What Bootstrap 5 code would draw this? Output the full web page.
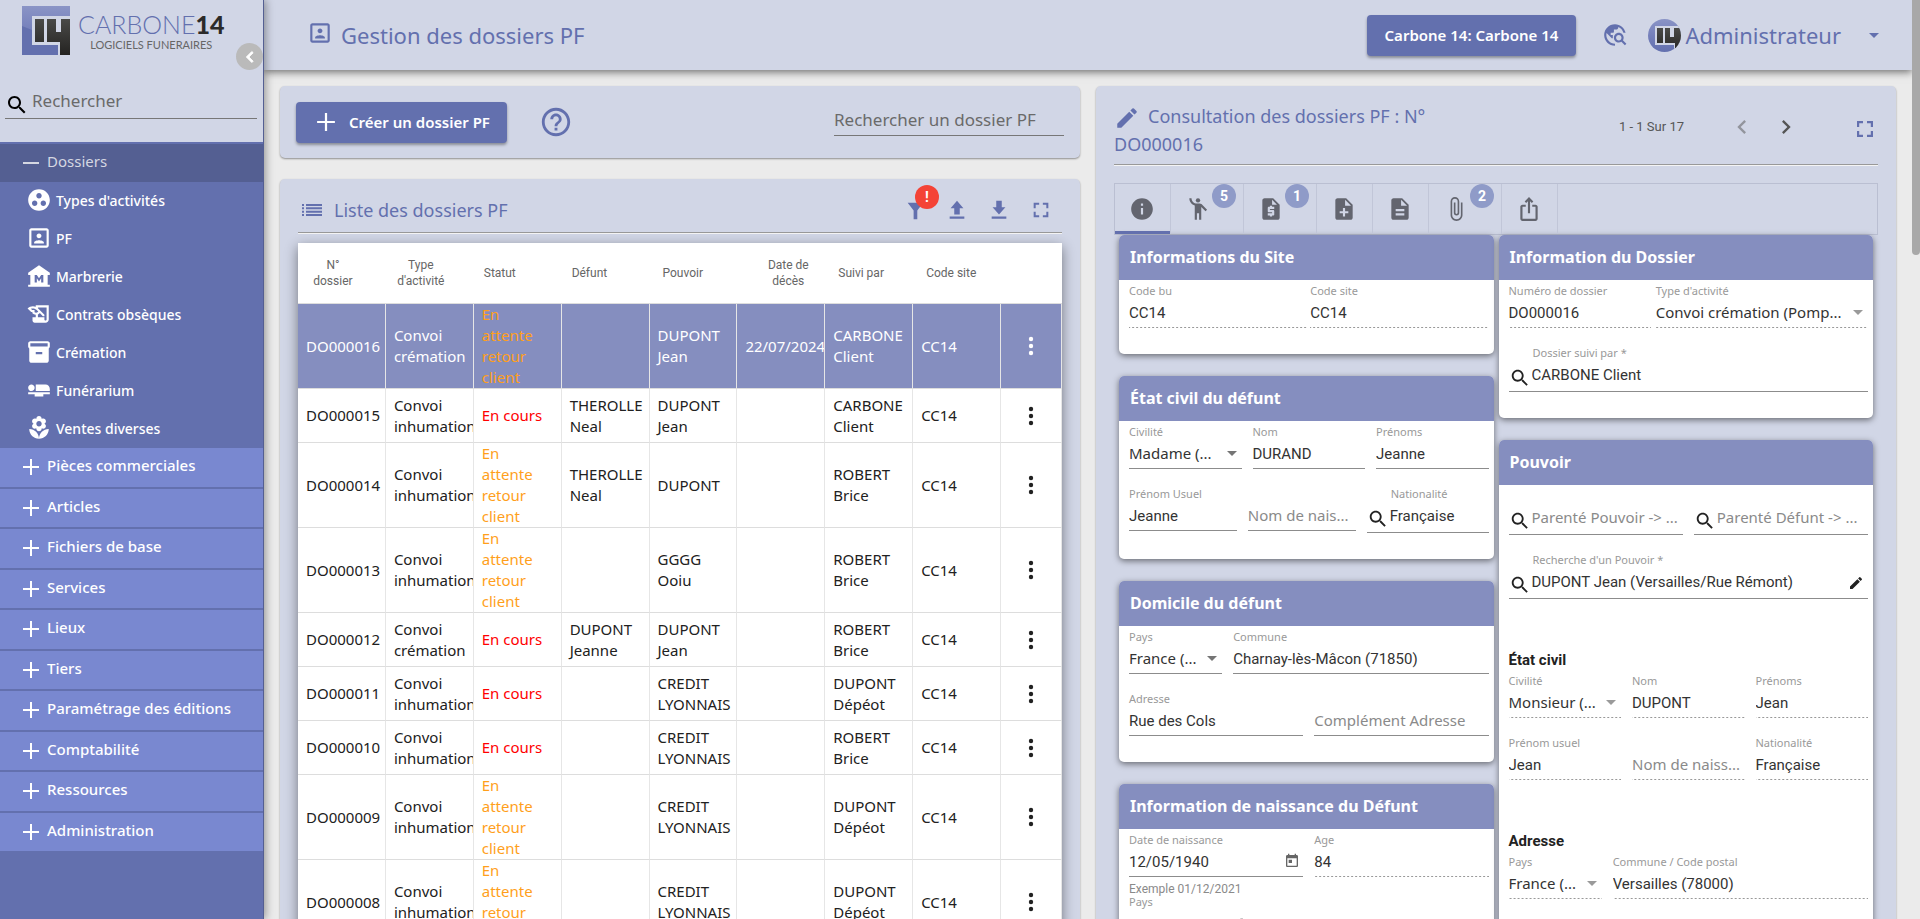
<!DOCTYPE html>
<html lang="fr">
<head>
<meta charset="utf-8">
<meta name="viewport" content="width=device-width, initial-scale=1">
<title>Gestion des dossiers PF</title>
<link href="https://cdn.jsdelivr.net/npm/bootstrap@5.3.0/dist/css/bootstrap.min.css" rel="stylesheet">
<style>
:root{--brand:#6370ae;--brand-soft:#858ebf;--panel:#d1d6e6;--ui:"Noto Sans",sans-serif;--num:Roboto,sans-serif}
body{font-family:var(--ui);font-size:15px;background:#ebebeb;color:#212121}
svg{fill:currentColor;flex:none;display:block}
button{border:0;background:none;padding:0;color:inherit}
a{text-decoration:none}
.i16{width:16px;height:16px}.i20{width:20px;height:20px}.i22{width:22px;height:22px}.i24{width:24px;height:24px}.i26{width:26px;height:26px}.i34{width:34px;height:34px}

/* sidebar */
.side{width:264px;background:var(--brand);border-right:1px solid #545f92;box-shadow:2px 0 8px rgba(0,0,0,.35);z-index:3}
.side-top{background:var(--panel);height:142px;position:relative}
.logo-row{padding:6px 0 0 22px}
.brand-name{font:300 25px/28px Lato,sans-serif;color:var(--brand)}
.brand-name b{font-weight:900;color:#2b2a29}
.brand-sub{font:400 11px/14px Lato,sans-serif;color:#666}
.fold{position:absolute;right:0;top:43px;width:27px;height:27px;border-radius:50%;background:#bababa;color:#fff}
.side-search{border-bottom:1px solid #777;margin:28px 6px 0 5px;height:36px;gap:3px}
.bare{border:0;outline:0;background:transparent;padding:0;min-width:0;width:100%;height:30px;font-size:17px;color:inherit}
.bare::placeholder{color:#6a6a6a;opacity:1}
.nav-top{display:flex;align-items:center;gap:7px;padding:6px 0 10px 22px;color:#fff;background:#7988d0;border-bottom:2px solid var(--brand);font-weight:500;line-height:1.5;width:100%;text-align:left}
.nav-top svg{margin-top:4px;width:18px;height:18px}
.nav-top.open{background:#545f92;color:#d5d7e2;height:38px;border:0;font-weight:400}
.nav-sub{display:flex;align-items:center;gap:4px;padding:0 0 2px 26px;color:#fff;height:38px;font-size:14px;font-weight:500}

/* header bar */
.bar{height:70px;background:var(--panel);color:var(--brand);box-shadow:0 2px 8px rgba(0,0,0,.55);z-index:2;padding:0 33px 0 43px}
.t22{font-size:22px;line-height:28px}
.solid{background:var(--brand);color:#fff;border-radius:4px;height:41px;font-size:15px;font-weight:600;box-shadow:0 2px 3px rgba(0,0,0,.35)}
.thumb{width:8px;background:#ebebeb}
.thumb i{display:block;height:255px;background:#a8a8a8;border-radius:0 0 4px 4px}

/* panels */
.halves{display:grid;grid-template-columns:repeat(2,minmax(0,1fr));min-height:0}
.pane{background:var(--panel);border-radius:5px;box-shadow:0 1px 2px rgba(0,0,0,.4);color:var(--brand)}
.pane h2{font-size:18px;line-height:27px;margin:0;font-weight:400}
.rule{height:2px;background:linear-gradient(#999 50%,#f4f4f4 50%)}
.finder{width:230px;border-bottom:1px solid #777;color:#333;height:32px}
.dot{position:absolute;width:24px;height:24px;border-radius:50%;color:#fff;font:700 14px/24px var(--num);text-align:center}
.dot.alert-dot{background:#f44336;right:-13px;top:-14px}

/* list */
.grid-list{width:100%;table-layout:fixed;background:#fff;color:#212121;box-shadow:0 4px 12px rgba(0,0,0,.45);line-height:21px;border-collapse:separate;border-spacing:0}
.grid-list th{height:61px;font:400 12px/16px var(--num);color:#666;padding:0 2px 0 10px;border-bottom:1px solid #ddd}
.grid-list th.mid{text-align:center;padding:0 18px 0 0}
.grid-list th.mid-r{padding:0 0 0 14px}
.grid-list th.in1{padding-left:13px}
.grid-list td{height:54px;padding:0 0 0 8px;border-bottom:1px solid #ddd;border-right:1px solid #e6e6e6;overflow:hidden;font-size:15px}
.grid-list td.tall{height:85px}
.grid-list td:last-child{padding:0}
.grid-list td button{display:block;margin:auto}
.grid-list .wait{color:#ff9f1c}.grid-list .run{color:#f00}
.grid-list .sel td{background:var(--brand-soft);color:#fff}
.grid-list .sel td.wait{color:#ff9f1c}

/* tabs */
.tabs{border:1px solid #babfd2;height:52px;color:#63656f}
.tabs button{position:relative;width:56px;border-right:1px solid #c1c6d8;padding-left:14px}
.tabs button.wide{width:73px}
.tabs button.on{box-shadow:inset 0 -3px var(--brand)}
.tabs .dot{background:#8f9bc8;right:7px;top:0}

/* record sheets */
.sheets{padding:0 5px;gap:5px}
.sheet{background:#fff;border-radius:5px;box-shadow:0 2px 6px rgba(0,0,0,.5);margin-bottom:22px;overflow:hidden;color:#333}
.sheet h3{background:var(--brand-soft);color:#fff;font-size:16px;font-weight:700;line-height:45px;margin:0;padding-left:11px}
.sheet-in{padding:0 5px 12px 10px}
.fr{display:grid;gap:11px}
.c2{grid-template-columns:1fr 1fr}.c3{grid-template-columns:repeat(3,1fr)}
.c3s{grid-template-columns:108fr 108fr 122fr}.c-pays{grid-template-columns:93fr 255fr}.c-num{grid-template-columns:142fr 212fr;gap:5px}
.fld{min-width:0;margin-bottom:14px;position:relative}
.fld label{display:block;font-size:11px;line-height:14px;padding-top:4px;color:#999;white-space:nowrap}
.fld.nolab{padding-top:18px}
.fld input,.fld select{display:block;width:100%;height:30px;border:0;border-bottom:1px solid #8c8c8c;border-radius:0;background:transparent;padding:0;outline:0;color:#333;font-family:var(--num);font-size:15px;appearance:none;min-width:0;text-overflow:ellipsis}
.fld select{font-family:var(--ui);padding-right:24px;font-size:15px}
.fld input::placeholder{font-family:var(--ui);font-size:15px;color:#8a8a8a;opacity:1}
.fld.ro input,.fld.ro select{border-bottom-color:transparent;background:linear-gradient(to right,#999 0 50%,transparent 0) bottom/4px 1px repeat-x border-box}
.fld.dd::after{content:"";position:absolute;right:5px;top:30px;border:5px solid transparent;border-top-color:#757575;border-bottom:0}
.fld.ro.dd::after{border-top-color:#9a9a9a}
.fld.find label{padding-left:24px}
.fld.find .line{display:flex;gap:1px;height:32px;border-bottom:1px solid #8c8c8c;color:#222}
.fld.find .line>svg{margin-top:7px}
.fld.find input{border:0}
.hint{display:block;height:14px;margin-bottom:-14px;font:400 12px/24px var(--num);color:#8a8a8a}
.cal{position:absolute;right:3px;top:24px;color:#666}
.part{font:700 15px/20px var(--num);margin:37px 0 0;color:#222}
</style>
<script src="https://cdn.jsdelivr.net/npm/bootstrap@5.3.0/dist/js/bootstrap.bundle.min.js"></script>
</head>
<body class="vh-100 overflow-hidden">
<svg width="0" height="0" class="position-absolute" aria-hidden="true"><defs>
<linearGradient id="gb" x1="0" y1="0" x2="0" y2="1"><stop offset="0" stop-color="#8a94c6"/><stop offset=".5" stop-color="#7580bb"/><stop offset="1" stop-color="#6370ae"/></linearGradient>
<linearGradient id="gk" x1="0" y1="0" x2="0" y2="1"><stop offset="0" stop-color="#4a4a48"/><stop offset="1" stop-color="#242321"/></linearGradient>
<symbol id="logo" viewBox="0 0 48 49"><path fill="url(#gb)" d="M0 0h48v10H10v29h26v10H0z"/><path fill="#6370ae" d="M0 20l10 4v15h26v10H0z"/><path fill="url(#gk)" d="M13 13h9v23h-9zM25 13h9v13h5V13h9v36H38V36H25z"/></symbol>
<symbol id="search" viewBox="0 0 24 24"><path d="M15.500 14h-.79l-.28-.27C15.410 12.590 16 11.110 16 9.500 16 5.910 13.090 3 9.500 3S3 5.910 3 9.500 5.910 16 9.500 16c1.610 0 3.090-.59 4.230-1.570l.27.28v.79l5 4.990L20.490 19l-4.990-5zm-6 0C7.010 14 5 11.990 5 9.500S7.010 5 9.500 5 14 7.010 14 9.500 11.990 14 9.500 14z"/></symbol>
<symbol id="plus" viewBox="0 0 18 18"><path d="M8 1h2v7h7v2h-7v7H8v-7H1V8h7z"/></symbol>
<symbol id="minus" viewBox="0 0 18 18"><path d="M1 8h16v2H1z"/></symbol>
<symbol id="left" viewBox="0 0 24 24"><path d="M15.410 7.410L14 6l-6 6 6 6 1.410-1.410L10.830 12z"/></symbol>
<symbol id="right" viewBox="0 0 24 24"><path d="M10 6L8.590 7.410 13.170 12l-4.580 4.590L10 18l6-6z"/></symbol>
<symbol id="work" viewBox="0 0 24 24"><path d="M12 2C6.480 2 2 6.480 2 12s4.480 10 10 10 10-4.480 10-10S17.520 2 12 2zM8 17.500c-1.380 0-2.500-1.120-2.500-2.500s1.120-2.500 2.500-2.500 2.500 1.120 2.500 2.500-1.120 2.500-2.500 2.500zM9.500 8c0-1.380 1.120-2.500 2.500-2.500s2.500 1.120 2.500 2.500-1.120 2.500-2.500 2.500S9.500 9.380 9.500 8zm6.500 9.500c-1.380 0-2.500-1.120-2.500-2.500s1.120-2.500 2.500-2.500 2.500 1.120 2.500 2.500-1.120 2.500-2.500 2.500z"/></symbol>
<symbol id="portrait" viewBox="0 0 24 24"><path d="M12 12.250c1.240 0 2.250-1.010 2.250-2.250S13.240 7.750 12 7.750 9.750 8.760 9.750 10s1.010 2.250 2.250 2.250zm4.500 4c0-1.500-3-2.250-4.500-2.250s-4.500.75-4.500 2.250V17h9v-.75zM19 3H5c-1.100 0-2 .9-2 2v14c0 1.100.9 2 2 2h14c1.100 0 2-.9 2-2V5c0-1.100-.9-2-2-2zm0 16H5V5h14v14z"/></symbol>
<symbol id="museum" viewBox="0 0 24 24"><path d="M22 11V9L12 2 2 9v2h2v9H2v2h20v-2h-2v-9h2zm-6 7h-2v-4l-2 3-2-3v4H8v-7h2l2 3 2-3h2v7z"/></symbol>
<symbol id="edu" viewBox="0 0 24 24"><path d="M9 4v1.380c-.83-.33-1.720-.5-2.610-.5-1.790 0-3.580.68-4.950 2.050l3.330 3.330h1.110v1.110c.86.86 1.980 1.310 3.110 1.360V15H6v3c0 1.100.9 2 2 2h10c1.660 0 3-1.340 3-3V4H9zM7.890 10.410V8.260H5.610L4.570 7.220C5.140 7 5.760 6.880 6.390 6.880c1.340 0 2.590.52 3.540 1.460l1.410 1.410-.2.2c-.51.51-1.190.8-1.920.8-.47 0-.93-.12-1.330-.34zM19 17c0 .55-.45 1-1 1s-1-.45-1-1v-2h-6v-2.590c.57-.23 1.100-.57 1.560-1.030l.2-.2L15.590 14H17v-1.410l-6-5.970V6h8v11z"/></symbol>
<symbol id="box" viewBox="0 0 24 24"><path d="M20 2H4c-1 0-2 .9-2 2v3.010c0 .72.43 1.340 1 1.690V20c0 1.100 1.100 2 2 2h14c.9 0 2-.9 2-2V8.700c.57-.35 1-.97 1-1.690V4c0-1.100-1-2-2-2zm-5 12H9v-2h6v2zm5-7H4V4h16v3z"/></symbol>
<symbol id="bed" viewBox="0 0 24 24"><path d="M22 11v2H9V7h9c2.210 0 4 1.790 4 4zM2 14v2h6v2h8v-2h6v-2H2zm5.140-1.900c1.160-1.190 1.140-3.080-.04-4.240-1.190-1.160-3.080-1.140-4.240.04-1.160 1.190-1.140 3.080.04 4.240 1.190 1.160 3.080 1.140 4.240-.04z"/></symbol>
<symbol id="flower" viewBox="0 0 24 24"><path d="M12 22c4.970 0 9-4.030 9-9-4.970 0-9 4.030-9 9zM5.600 10.250c0 1.380 1.120 2.500 2.500 2.500.53 0 1.010-.16 1.420-.44l-.02.19c0 1.380 1.120 2.500 2.500 2.500s2.500-1.120 2.500-2.500l-.02-.19c.4.28.89.44 1.420.44 1.380 0 2.500-1.120 2.500-2.500 0-1-.59-1.850-1.430-2.250.84-.4 1.430-1.250 1.430-2.250 0-1.380-1.120-2.500-2.500-2.500-.53 0-1.010.16-1.420.44l.02-.19C14.500 2.120 13.380 1 12 1S9.500 2.120 9.500 3.500l.02.19c-.4-.28-.89-.44-1.420-.44-1.380 0-2.500 1.120-2.500 2.500 0 1 .59 1.850 1.430 2.250-.84.4-1.430 1.250-1.430 2.250zM12 5.500c1.380 0 2.500 1.120 2.500 2.500s-1.120 2.500-2.500 2.500S9.500 9.380 9.500 8s1.120-2.500 2.500-2.500zM3 13c0 4.970 4.030 9 9 9 0-4.970-4.030-9-9-9z"/></symbol>
<symbol id="explore" viewBox="0 0 24 24"><path d="M19.300 16.900c.4-.7.7-1.500.7-2.400 0-2.500-2-4.500-4.500-4.500S11 12 11 14.500s2 4.500 4.500 4.500c.9 0 1.700-.3 2.400-.7l3.200 3.200 1.400-1.400-3.200-3.200zm-3.800.1c-1.400 0-2.500-1.100-2.500-2.500s1.100-2.500 2.500-2.500 2.500 1.100 2.500 2.500-1.100 2.500-2.500 2.500zM12 20v2C6.480 22 2 17.520 2 12S6.480 2 12 2c4.840 0 8.870 3.440 9.800 8h-2.070A8 8 0 0 0 15 4.590V5c0 1.100-.9 2-2 2h-2v2c0 .55-.45 1-1 1H8v2h2v3H9l-4.790-4.790C4.080 10.790 4 11.380 4 12c0 4.410 3.590 8 8 8z"/></symbol>
<symbol id="help" viewBox="0 0 24 24"><path d="M11 18h2v-2h-2v2zm1-16C6.480 2 2 6.480 2 12s4.480 10 10 10 10-4.480 10-10S17.520 2 12 2zm0 18c-4.410 0-8-3.590-8-8s3.590-8 8-8 8 3.590 8 8-3.590 8-8 8zm0-14c-2.210 0-4 1.790-4 4h2c0-1.100.9-2 2-2s2 .9 2 2c0 2-3 1.750-3 5h2c0-2.250 3-2.500 3-5 0-2.210-1.790-4-4-4z"/></symbol>
<symbol id="list" viewBox="0 0 20 12"><path d="M0 0h2v2H0zM4 0h16v2H4zM0 3.300h2v2H0zM4 3.300h16v2H4zM0 6.700h2v2H0zM4 6.700h16v2H4zM0 10h2v2H0zM4 10h16v2H4z"/></symbol>
<symbol id="filter" viewBox="0 0 24 24"><path d="M4 4h17l-6.500 8.500V22h-4v-9.500z"/></symbol>
<symbol id="up" viewBox="0 0 24 24"><path d="M12 2l7 8h-4v7H9v-7H5zM4 19h16v2.500H4z"/></symbol>
<symbol id="down" viewBox="0 0 24 24"><path d="M12 17l7-8h-4V2H9v7H5zM4 19h16v2.500H4z"/></symbol>
<symbol id="full" viewBox="0 0 24 24"><path d="M4 4h6v2.200H6.200V10H4zM14 4h6v6h-2.200V6.200H14zM4 14h2.200v3.800H10V20H4zM17.800 14H20v6h-6v-2.200h3.800z"/></symbol>
<symbol id="dots" viewBox="0 0 24 24"><circle cx="12" cy="5" r="2.200"/><circle cx="12" cy="12" r="2.200"/><circle cx="12" cy="19" r="2.200"/></symbol>
<symbol id="pen" viewBox="0 0 24 24"><path d="M3 17.250V21h3.750L17.810 9.940l-3.750-3.750L3 17.250zM20.710 7.040a1 1 0 0 0 0-1.410l-2.340-2.340a1 1 0 0 0-1.410 0l-1.830 1.830 3.750 3.750 1.830-1.830z"/></symbol>
<symbol id="info" viewBox="0 0 24 24"><path d="M12 2C6.480 2 2 6.480 2 12s4.480 10 10 10 10-4.480 10-10S17.520 2 12 2zm1 15h-2v-6h2v6zm0-8h-2V7h2v2z"/></symbol>
<symbol id="man" viewBox="0 0 24 24"><circle cx="12" cy="4" r="2"/><path d="M15.890 8.110C15.500 7.720 14.830 7 13.530 7h-2.540C8.240 6.990 6 4.750 6 2H4c0 3.160 2.110 5.840 5 6.710V22h2v-6h2v6h2V10.050L18.950 14l1.410-1.410-4.470-4.480z"/></symbol>
<symbol id="docm" viewBox="0 0 24 24"><path d="M14 2H6c-1.100 0-2 .9-2 2v16c0 1.100.89 2 1.990 2H18c1.100 0 2-.9 2-2V8l-6-6zm1 10h-4v1h3c.55 0 1 .45 1 1v3c0 .55-.45 1-1 1h-1v1h-2v-1H9v-2h4v-1h-3c-.55 0-1-.45-1-1v-3c0-.55.45-1 1-1h1V9h2v1h2v2zm-2-4V3.500L17.500 8H13z"/></symbol>
<symbol id="docp" viewBox="0 0 24 24"><path d="M14 2H6c-1.100 0-2 .9-2 2v16c0 1.100.89 2 1.990 2H18c1.100 0 2-.9 2-2V8l-6-6zm2 14h-3v3h-2v-3H8v-2h3v-3h2v3h3v2zm-3-7V3.500L18.500 9H13z"/></symbol>
<symbol id="doct" viewBox="0 0 24 24"><path d="M14 2H6c-1.100 0-2 .9-2 2v16c0 1.100.89 2 1.990 2H18c1.100 0 2-.9 2-2V8l-6-6zm2 16H8v-2h8v2zm0-4H8v-2h8v2zm-3-5V3.500L18.500 9H13z"/></symbol>
<symbol id="clip" viewBox="0 0 24 24"><path d="M16.500 6v11.500c0 2.210-1.790 4-4 4s-4-1.790-4-4V5a2.500 2.500 0 0 1 5 0v10.500c0 .55-.45 1-1 1s-1-.45-1-1V6H10v9.500a2.500 2.500 0 0 0 5 0V5c0-2.210-1.790-4-4-4S7 2.790 7 5v12.500c0 3.040 2.460 5.500 5.500 5.500s5.500-2.460 5.500-5.500V6h-1.500z"/></symbol>
<symbol id="share" viewBox="0 0 24 24"><path d="M16 5l-1.420 1.420-1.590-1.590V16h-1.980V4.830L9.420 6.420 8 5l4-4 4 4zm4 5v11c0 1.100-.9 2-2 2H6c-1.110 0-2-.9-2-2V10c0-1.110.89-2 2-2h3v2H6v11h12V10h-3V8h3c1.100 0 2 .89 2 2z"/></symbol>
<symbol id="today" viewBox="0 0 24 24"><path d="M19 3h-1V1h-2v2H8V1H6v2H5c-1.110 0-1.990.9-1.990 2L3 19c0 1.100.89 2 2 2h14c1.100 0 2-.9 2-2V5c0-1.100-.9-2-2-2zm0 16H5V8h14v11zM7 10h5v5H7z"/></symbol>
</defs></svg>

<div class="d-flex h-100">
<aside class="side d-flex flex-column flex-shrink-0">
  <div class="side-top">
    <div class="logo-row d-flex gap-2">
      <svg width="48" height="49"><use href="#logo"/></svg>
      <div class="pt-1"><div class="brand-name">CARBONE<b>14</b></div><div class="brand-sub text-center">LOGICIELS FUNERAIRES</div></div>
    </div>
    <button class="fold d-flex align-items-center justify-content-center" aria-label="Réduire le menu"><svg class="i22" stroke="currentColor"><use href="#left"/></svg></button>
    <div class="side-search d-flex align-items-center">
      <svg class="i24 mt-2 text-black"><use href="#search"/></svg>
      <label class="visually-hidden" for="menuq">Rechercher</label><input id="menuq" class="bare" placeholder="Rechercher">
    </div>
  </div>
  <nav class="d-block" style="padding-top:2px" aria-label="Menu">
    <button class="nav-top open"><svg><use href="#minus"/></svg>Dossiers</button>
    <a class="nav-sub" href="#"><svg class="i26"><use href="#work"/></svg>Types d'activités</a>
    <a class="nav-sub" href="#"><svg class="i26"><use href="#portrait"/></svg>PF</a>
    <a class="nav-sub" href="#"><svg class="i26"><use href="#museum"/></svg>Marbrerie</a>
    <a class="nav-sub" href="#"><svg class="i26"><use href="#edu"/></svg>Contrats obsèques</a>
    <a class="nav-sub" href="#"><svg class="i26"><use href="#box"/></svg>Crémation</a>
    <a class="nav-sub" href="#"><svg class="i26"><use href="#bed"/></svg>Funérarium</a>
    <a class="nav-sub" href="#"><svg class="i26"><use href="#flower"/></svg>Ventes diverses</a>
    <button class="nav-top"><svg><use href="#plus"/></svg>Pièces commerciales</button>
    <button class="nav-top"><svg><use href="#plus"/></svg>Articles</button>
    <button class="nav-top"><svg><use href="#plus"/></svg>Fichiers de base</button>
    <button class="nav-top"><svg><use href="#plus"/></svg>Services</button>
    <button class="nav-top"><svg><use href="#plus"/></svg>Lieux</button>
    <button class="nav-top"><svg><use href="#plus"/></svg>Tiers</button>
    <button class="nav-top"><svg><use href="#plus"/></svg>Paramétrage des éditions</button>
    <button class="nav-top"><svg><use href="#plus"/></svg>Comptabilité</button>
    <button class="nav-top"><svg><use href="#plus"/></svg>Ressources</button>
    <button class="nav-top"><svg><use href="#plus"/></svg>Administration</button>
  </nav>
</aside>

<div class="flex-grow-1 d-flex flex-column overflow-hidden" style="min-width:0">
  <header class="bar d-flex align-items-center flex-shrink-0">
    <svg class="i26 mb-1"><use href="#portrait"/></svg>
    <h1 class="t22 m-0 ms-2 fw-normal me-auto">Gestion des dossiers PF</h1>
    <button class="solid" style="padding:0 18px">Carbone 14: Carbone 14</button>
    <button style="margin:0 20px 0 26px" aria-label="Explorer"><svg class="i26"><use href="#explore"/></svg></button>
    <button class="d-flex align-items-center t22">
      <svg width="33" height="33" viewBox="0 0 33 33" class="me-1"><defs><clipPath id="cc"><circle cx="16.500" cy="16.500" r="16.500"/></clipPath></defs><g clip-path="url(#cc)"><path fill="url(#gb)" d="M0 0h33v33H0z"/><path fill="#d1d6e6" d="M7 7h26v26h-7v-7H7z"/><path fill="url(#gk)" d="M9 9h6v15H9zM17 9h5v9h4V9h7v24h-6v-9H17z"/></g></svg>
      Administrateur
      <svg width="10" height="5" viewBox="0 0 10 5" style="margin-left:28px"><path d="M0 0h10L5 5z"/></svg>
    </button>
  </header>
  <main class="halves gap-3 p-3 align-items-start flex-grow-1 overflow-hidden">
    <div class="d-flex flex-column" style="gap:21px">
      <section class="pane d-flex align-items-center px-3" style="height:72px">
        <button class="solid d-flex align-items-center" style="gap:13px;padding:0 17px 0 20px"><svg class="i20"><use href="#plus"/></svg>Créer un dossier PF</button>
        <button class="ms-4 ps-2" aria-label="Aide"><svg class="i34"><use href="#help"/></svg></button>
        <div class="finder ms-auto d-flex align-items-center mb-1"><label class="visually-hidden" for="dq">Rechercher un dossier PF</label><input id="dq" class="bare" placeholder="Rechercher un dossier PF"></div>
      </section>
      <section class="pane" style="padding:17px 18px 0">
        <div class="d-flex align-items-center" style="height:28px">
          <svg width="20" height="12" class="ms-1"><use href="#list"/></svg>
          <h2 class="me-auto" style="padding-left:12px">Liste des dossiers PF</h2>
          <div class="d-flex" style="gap:20px;margin-right:10px">
            <button class="position-relative" aria-label="Filtrer"><svg class="i22"><use href="#filter"/></svg><span class="dot alert-dot">!</span></button>
            <button aria-label="Importer"><svg class="i22"><use href="#up"/></svg></button>
            <button aria-label="Exporter"><svg class="i22"><use href="#down"/></svg></button>
            <button aria-label="Plein écran"><svg class="i22"><use href="#full"/></svg></button>
          </div>
        </div>
        <div class="rule" style="margin:8px 0 9px"></div>
        <table class="grid-list">
          <colgroup><col><col><col><col><col><col><col><col><col style="width:61px"></colgroup>
          <thead><tr><th class="mid">N°<br>dossier</th><th class="mid">Type<br>d'activité</th><th>Statut</th><th>Défunt</th><th class="in1">Pouvoir</th><th class="mid mid-r">Date de<br>décès</th><th class="in1">Suivi par</th><th class="in1">Code site</th><th></th></tr></thead>
          <tbody>
          <tr class="sel"><td>DO000016</td><td>Convoi crémation</td><td class="wait tall">En<br>attente<br>retour<br>client</td><td></td><td>DUPONT Jean</td><td>22/07/2024</td><td>CARBONE Client</td><td>CC14</td><td><button aria-label="Actions"><svg class="i24"><use href="#dots"/></svg></button></td></tr>
          <tr><td>DO000015</td><td>Convoi inhumation</td><td class="run">En cours</td><td>THEROLLE Neal</td><td>DUPONT Jean</td><td></td><td>CARBONE Client</td><td>CC14</td><td><button aria-label="Actions"><svg class="i24"><use href="#dots"/></svg></button></td></tr>
          <tr><td>DO000014</td><td>Convoi inhumation</td><td class="wait tall">En<br>attente<br>retour<br>client</td><td>THEROLLE Neal</td><td>DUPONT</td><td></td><td>ROBERT Brice</td><td>CC14</td><td><button aria-label="Actions"><svg class="i24"><use href="#dots"/></svg></button></td></tr>
          <tr><td>DO000013</td><td>Convoi inhumation</td><td class="wait tall">En<br>attente<br>retour<br>client</td><td></td><td>GGGG<br>Ooiu</td><td></td><td>ROBERT Brice</td><td>CC14</td><td><button aria-label="Actions"><svg class="i24"><use href="#dots"/></svg></button></td></tr>
          <tr><td>DO000012</td><td>Convoi crémation</td><td class="run">En cours</td><td>DUPONT Jeanne</td><td>DUPONT Jean</td><td></td><td>ROBERT Brice</td><td>CC14</td><td><button aria-label="Actions"><svg class="i24"><use href="#dots"/></svg></button></td></tr>
          <tr><td>DO000011</td><td>Convoi inhumation</td><td class="run">En cours</td><td></td><td>CREDIT LYONNAIS</td><td></td><td>DUPONT Dépéot</td><td>CC14</td><td><button aria-label="Actions"><svg class="i24"><use href="#dots"/></svg></button></td></tr>
          <tr><td>DO000010</td><td>Convoi inhumation</td><td class="run">En cours</td><td></td><td>CREDIT LYONNAIS</td><td></td><td>ROBERT Brice</td><td>CC14</td><td><button aria-label="Actions"><svg class="i24"><use href="#dots"/></svg></button></td></tr>
          <tr><td>DO000009</td><td>Convoi inhumation</td><td class="wait tall">En<br>attente<br>retour<br>client</td><td></td><td>CREDIT LYONNAIS</td><td></td><td>DUPONT Dépéot</td><td>CC14</td><td><button aria-label="Actions"><svg class="i24"><use href="#dots"/></svg></button></td></tr>
          <tr><td>DO000008</td><td>Convoi inhumation</td><td class="wait tall">En<br>attente<br>retour<br>client</td><td></td><td>CREDIT LYONNAIS</td><td></td><td>DUPONT Dépéot</td><td>CC14</td><td><button aria-label="Actions"><svg class="i24"><use href="#dots"/></svg></button></td></tr>
          </tbody>
        </table>
      </section>
    </div>

    <section class="pane" style="padding:17px 18px 0">
      <div class="d-flex" style="height:61px">
        <h2 style="width:330px"><svg class="i26 d-inline-block align-middle me-2"><use href="#pen"/></svg>Consultation des dossiers PF : N° DO000016</h2>
        <div class="ms-auto d-flex align-items-center" style="height:48px;margin-right:1px;color:#555">
          <span style="font:400 13px/16px var(--num)">1 - 1 Sur 17</span>
          <button class="opacity-50" aria-label="Précédent" style="margin:0 16px 0 44px"><svg width="28" height="28"><use href="#left"/></svg></button>
          <button aria-label="Suivant"><svg width="28" height="28"><use href="#right"/></svg></button>
          <button aria-label="Plein écran" class="pt-1" style="margin-left:53px;color:var(--brand)"><svg class="i24"><use href="#full"/></svg></button>
        </div>
      </div>
      <div class="rule" style="margin-bottom:17px"></div>
      <div class="tabs d-flex">
        <button class="on" aria-label="Informations"><svg class="i26"><use href="#info"/></svg></button>
        <button class="wide" aria-label="Intervenants"><svg class="i26"><use href="#man"/></svg><span class="dot">5</span></button>
        <button class="wide" aria-label="Factures"><svg class="i26"><use href="#docm"/></svg><span class="dot">1</span></button>
        <button aria-label="Ajouter"><svg class="i26"><use href="#docp"/></svg></button>
        <button aria-label="Documents"><svg class="i26"><use href="#doct"/></svg></button>
        <button class="wide" aria-label="Pièces jointes"><svg class="i26"><use href="#clip"/></svg><span class="dot">2</span></button>
        <button aria-label="Partager"><svg class="i26"><use href="#share"/></svg></button>
      </div>
      <div class="halves sheets">
        <div>
          <form class="sheet"><h3>Informations du Site</h3><div class="sheet-in">
            <div class="fr c2" style="gap:3px"><div class="fld ro"><label for="a1">Code bu</label><input id="a1" value="CC14" readonly></div><div class="fld ro"><label for="a2">Code site</label><input id="a2" value="CC14" readonly></div></div>
          </div></form>
          <form class="sheet"><h3>État civil du défunt</h3><div class="sheet-in">
            <div class="fr c3"><div class="fld dd"><label for="b1">Civilité</label><select id="b1"><option>Madame (...</option></select></div><div class="fld"><label for="b2">Nom</label><input id="b2" value="DURAND"></div><div class="fld"><label for="b3">Prénoms</label><input id="b3" value="Jeanne"></div></div>
            <div class="fr c3s"><div class="fld"><label for="b4">Prénom Usuel</label><input id="b4" value="Jeanne"></div><div class="fld nolab"><label class="visually-hidden" for="b5">Nom de naissance</label><input id="b5" placeholder="Nom de nais..."></div><div class="fld find"><label for="b6">Nationalité</label><div class="line"><svg class="i22"><use href="#search"/></svg><input id="b6" value="Française"></div></div></div>
          </div></form>
          <form class="sheet"><h3>Domicile du défunt</h3><div class="sheet-in">
            <div class="fr c-pays"><div class="fld dd"><label for="c1">Pays</label><select id="c1"><option>France (...</option></select></div><div class="fld"><label for="c2">Commune</label><input id="c2" value="Charnay-lès-Mâcon (71850)"></div></div>
            <div class="fr c2"><div class="fld"><label for="c3">Adresse</label><input id="c3" value="Rue des Cols"></div><div class="fld nolab"><label class="visually-hidden" for="c4">Complément Adresse</label><input id="c4" placeholder="Complément Adresse"></div></div>
          </div></form>
          <form class="sheet"><h3>Information de naissance du Défunt</h3><div class="sheet-in">
            <div class="fr c2"><div class="fld"><label for="d1">Date de naissance</label><input id="d1" value="12/05/1940"><button type="button" class="cal" aria-label="Calendrier"><svg class="i16"><use href="#today"/></svg></button><small class="hint">Exemple 01/12/2021</small></div><div class="fld ro"><label for="d2">Age</label><input id="d2" value="84" readonly></div></div>
            <div class="fr c-pays"><div class="fld dd"><label for="d3">Pays</label><select id="d3"><option>France (...</option></select></div><div class="fld find nolab"><label class="visually-hidden" for="d4">Commune</label><div class="line"><svg class="i22"><use href="#search"/></svg><input id="d4"></div></div></div>
          </div></form>
        </div>
        <div>
          <form class="sheet"><h3>Information du Dossier</h3><div class="sheet-in">
            <div class="fr c-num"><div class="fld ro"><label for="e1">Numéro de dossier</label><input id="e1" value="DO000016" readonly></div><div class="fld ro dd"><label for="e2">Type d'activité</label><select id="e2"><option>Convoi crémation (Pomp...</option></select></div></div>
            <div class="fr"><div class="fld find"><label for="e3">Dossier suivi par *</label><div class="line"><svg class="i22"><use href="#search"/></svg><input id="e3" value="CARBONE Client"></div></div></div>
          </div></form>
          <form class="sheet"><h3>Pouvoir</h3><div class="sheet-in">
            <div class="fr c2"><div class="fld find nolab"><label class="visually-hidden" for="f1">Parenté Pouvoir</label><div class="line"><svg class="i22"><use href="#search"/></svg><input id="f1" placeholder="Parenté Pouvoir -&gt; ..."></div></div><div class="fld find nolab"><label class="visually-hidden" for="f2">Parenté Défunt</label><div class="line"><svg class="i22"><use href="#search"/></svg><input id="f2" placeholder="Parenté Défunt -&gt; ..."></div></div></div>
            <div class="fr"><div class="fld find"><label for="f3">Recherche d'un Pouvoir *</label><div class="line"><svg class="i22"><use href="#search"/></svg><input id="f3" value="DUPONT Jean (Versailles/Rue Rémont)"><button type="button" class="me-1" aria-label="Modifier"><svg class="i16"><use href="#pen"/></svg></button></div></div></div>
            <h4 class="part">État civil</h4>
            <div class="fr c3"><div class="fld ro dd"><label for="g1">Civilité</label><select id="g1"><option>Monsieur (...</option></select></div><div class="fld ro"><label for="g2">Nom</label><input id="g2" value="DUPONT" readonly></div><div class="fld ro"><label for="g3">Prénoms</label><input id="g3" value="Jean" readonly></div></div>
            <div class="fr c3"><div class="fld ro"><label for="g4">Prénom usuel</label><input id="g4" value="Jean" readonly></div><div class="fld ro nolab"><label class="visually-hidden" for="g5">Nom de naissance</label><input id="g5" placeholder="Nom de naiss..." readonly></div><div class="fld ro"><label for="g6">Nationalité</label><input id="g6" value="Française" readonly></div></div>
            <h4 class="part">Adresse</h4>
            <div class="fr c-pays"><div class="fld ro dd"><label for="h1">Pays</label><select id="h1"><option>France (...</option></select></div><div class="fld ro"><label for="h2">Commune / Code postal</label><input id="h2" value="Versailles (78000)" readonly></div></div>
            <div class="fr c2 pt-4"></div>
          </div></form>
        </div>
      </div>
    </section>
  </main>
</div>
<div class="thumb flex-shrink-0"><i></i></div>
</div>
</body>
</html>
